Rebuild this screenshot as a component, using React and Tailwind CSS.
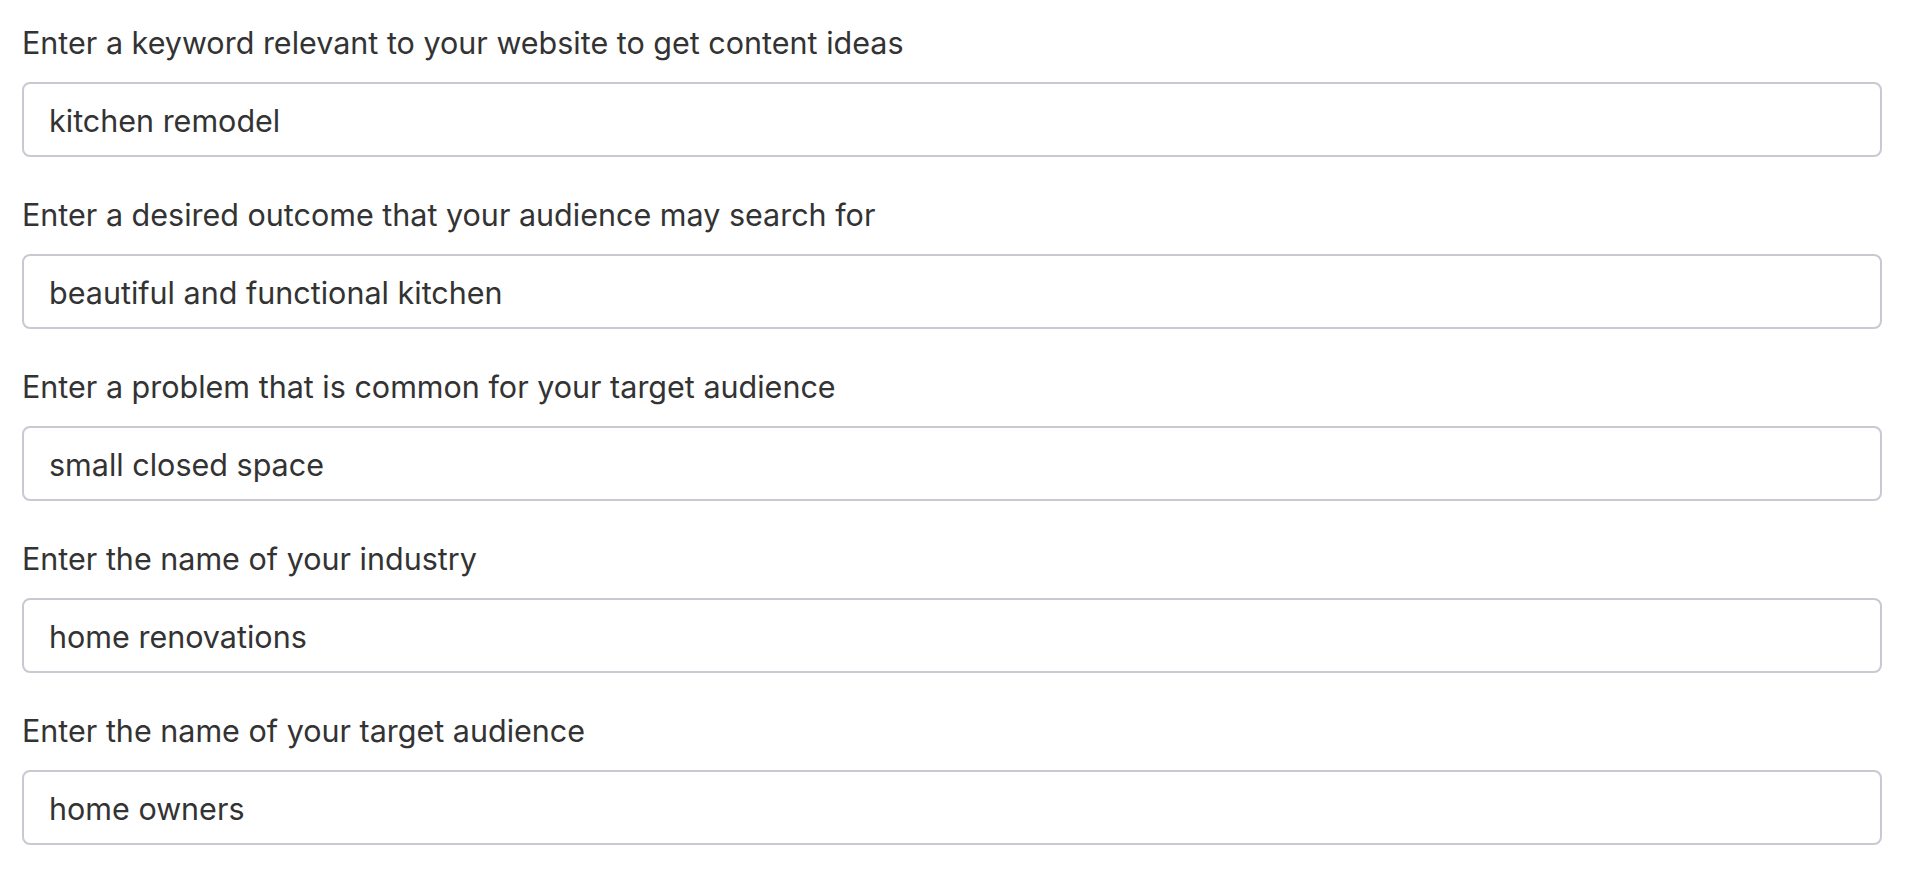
export default function App() {
  const rows = [
    ["Enter a keyword relevant to your website to get content ideas", "kitchen remodel"],
    ["Enter a desired outcome that your audience may search for", "beautiful and functional kitchen"],
    ["Enter a problem that is common for your target audience", "small closed space"],
    ["Enter the name of your industry", "home renovations"],
    ["Enter the name of your target audience", "home owners"],
  ];
  return (
    <div className="w-[1908px] h-[874px] bg-white overflow-hidden pl-[22px] pr-[26px] pt-[20px] font-['Inter','Liberation_Sans',sans-serif] text-[#333333]">
      <div className="flex flex-col gap-[35px]">
        {rows.map(([label, value]) => (
          <div key={label} className="flex flex-col">
            <label className="text-[30.5px] leading-[46px] mb-[16px]">{label}</label>
            <input
              readOnly
              value={value}
              className="h-[75px] w-full rounded-[8px] border-2 border-[#c7cad3] bg-white pl-[25px] pt-[2px] text-[30.5px] text-[#333333] outline-none"
            />
          </div>
        ))}
      </div>
    </div>
  );
}
